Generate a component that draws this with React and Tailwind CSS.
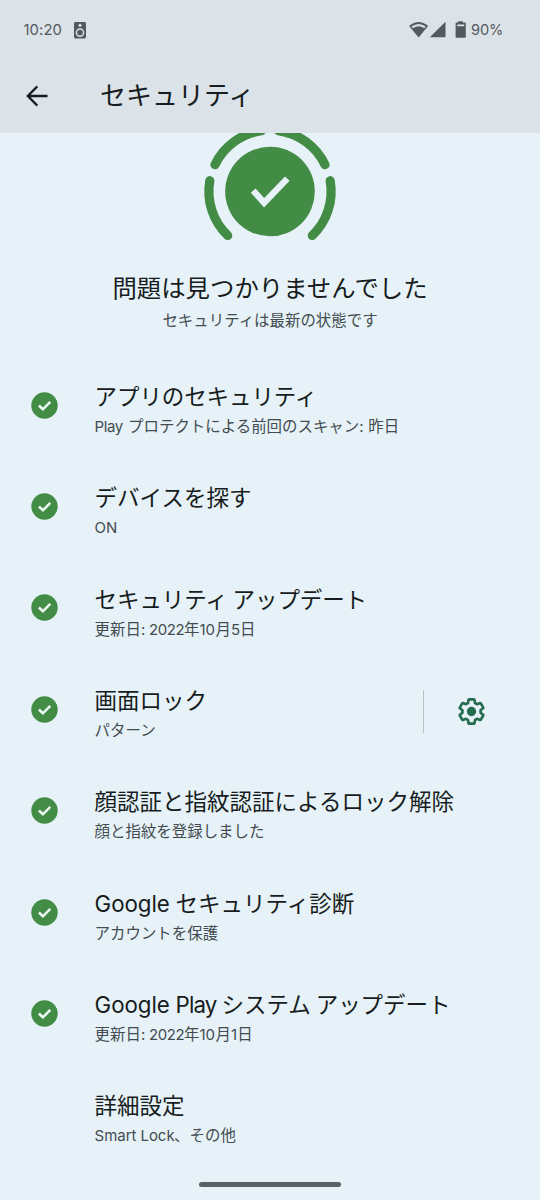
const TITLE_LATIN = "inline-block whitespace-pre font-['Inter'] text-[22.3px] leading-none";
const SUB_LATIN = "inline-block whitespace-pre font-['Inter'] text-[15px] leading-none";

const ROWS = [
  {
    title: [['アプリのセキュリティ', 'tracking-[-0.1px]']],
    sub: [['Play', `${SUB_LATIN} w-[33.5px] tracking-[-0.4px]`], ['プロテクトによる前回のスキャン'], [':', `${SUB_LATIN} w-[9px]`], ['昨日']],
  },
  { title: [['デバイスを探す']], sub: [['ON', `${SUB_LATIN} tracking-[-0.1px]`]] },
  {
    title: [['セキュリティ アップデート', 'tracking-[-0.1px]']],
    sub: [
      ['更新日'], [':', `${SUB_LATIN} w-[8px]`],
      ['2022', `${SUB_LATIN} w-[35px] tracking-[-0.4px]`], ['年'],
      ['10', `${SUB_LATIN} w-[16.2px] tracking-[-0.1px]`], ['月'],
      ['5', `${SUB_LATIN} w-[8.9px]`], ['日'],
    ],
  },
  { title: [['画面ロック']], sub: [['パターン']], settings: true },
  { title: [['顔認証と指紋認証によるロック解除']], sub: [['顔と指紋を登録しました']] },
  {
    title: [['Google', `${TITLE_LATIN} w-[81px] tracking-[-0.05px]`], ['セキュリティ診断']],
    sub: [['アカウントを保護']],
  },
  {
    title: [['Google', `${TITLE_LATIN} w-[81px] tracking-[-0.05px]`], ['Play', `${TITLE_LATIN} w-[46px] tracking-[-0.9px]`], ['システム アップデート', 'tracking-[-0.05px]']],
    sub: [
      ['更新日'], [':', `${SUB_LATIN} w-[8px]`],
      ['2022', `${SUB_LATIN} w-[35px] tracking-[-0.4px]`], ['年'],
      ['10', `${SUB_LATIN} w-[16.2px] tracking-[-0.1px]`], ['月'],
      ['1', `${SUB_LATIN} w-[6.2px]`], ['日'],
    ],
  },
  {
    title: [['詳細設定']],
    sub: [['Smart Lock', `${SUB_LATIN} w-[79.5px] tracking-[-0.05px]`], ['、その他']],
    plain: true,
  },
];

function Parts({ parts }) {
  return parts.map(([text, cls], i) => (
    <span key={i} className={cls}>{text}</span>
  ));
}

function CheckBadge() {
  return (
    <svg className="block h-[27px] w-[27px]" viewBox="0 0 27 27">
      <circle cx="13.5" cy="13.5" r="13.2" fill="#438c45" />
      <path d="M7.9 13.5 L11.9 17.3 L19.3 9.9" fill="none" stroke="#eef8f3" strokeWidth="2.6" />
    </svg>
  );
}

function Gear() {
  return (
    <svg className="block h-[31px] w-[31px] overflow-visible" viewBox="0 0 24 24">
      <path
        fill="none"
        stroke="#246b4f"
        strokeWidth="2.1"
        strokeLinejoin="round"
        d="M19.14,12.94c0.04-0.3,0.06-0.61,0.06-0.94c0-0.32-0.02-0.64-0.07-0.94l2.03-1.58c0.18-0.14,0.23-0.41,0.12-0.61l-1.92-3.32c-0.12-0.22-0.37-0.29-0.59-0.22l-2.39,0.96c-0.5-0.38-1.03-0.7-1.62-0.94L14.4,2.81c-0.04-0.24-0.24-0.41-0.48-0.41h-3.84c-0.24,0-0.43,0.17-0.47,0.41L9.25,5.35C8.66,5.59,8.12,5.92,7.63,6.29L5.24,5.33c-0.22-0.08-0.47,0-0.59,0.22L2.74,8.87C2.62,9.08,2.66,9.34,2.86,9.48l2.03,1.58C4.84,11.36,4.8,11.69,4.8,12s0.02,0.64,0.07,0.94l-2.03,1.58c-0.18,0.14-0.23,0.41-0.12,0.61l1.92,3.32c0.12,0.22,0.37,0.29,0.59,0.22l2.39-0.96c0.5,0.38,1.03,0.7,1.62,0.94l0.36,2.54c0.05,0.24,0.24,0.41,0.48,0.41h3.84c0.24,0,0.44-0.17,0.47-0.41l0.36-2.54c0.59-0.24,1.13-0.56,1.62-0.94l2.39,0.96c0.22,0.08,0.47,0,0.59-0.22l1.92-3.32c0.12-0.22,0.07-0.47-0.12-0.61L19.14,12.94z"
        transform="translate(12 12) scale(0.98) translate(-12 -12)"
      />
      <circle cx="12" cy="12" r="3.6" fill="#246b4f" />
    </svg>
  );
}

function StatusBar() {
  return (
    <div className="flex h-[60px] items-center pl-[23.5px] pr-[37px] text-[#53595e]">
      <span className="w-[50.5px] whitespace-nowrap font-['Inter'] text-[14.8px] leading-5 tracking-[0.1px]">10:20</span>
      <svg className="block h-[17px] w-3" viewBox="0 0 12 17">
        <rect width="12" height="16.4" rx="1.4" fill="#53595e" />
        <circle cx="6" cy="3.3" r="1.5" fill="#dbe2e8" />
        <circle cx="6" cy="10.6" r="3.6" fill="none" stroke="#dbe2e8" strokeWidth="1.5" />
      </svg>
      <div className="ml-auto flex items-center">
        <svg className="block h-[18px] w-[58px]" viewBox="0.7 0 58 18" overflow="visible">
          <path d="M-0.2 4.9 Q9.3 -3 18.8 4.9 L9.3 16.4 Z" fill="#53595e" />
          <path d="M2.2 5.6 Q9.3 0.3 16.4 5.6 L15 7.2 Q9.3 3.2 3.6 7.2 Z" fill="#dbe2e8" />
          <path d="M36.2 0.8 V16.2 H20.5 Z" fill="#53595e" />
          <path d="M48.9 0.2 H53.5 V1.6 H55.8 Q56.5 1.6 56.5 2.3 V15.5 Q56.5 16.8 55.2 16.8 H47.7 Q46.3 16.8 46.3 15.5 V2.3 Q46.3 1.6 47.1 1.6 H48.9 Z" fill="#53595e" />
          <path d="M47.9 3.5 H54.9 V5.2 H47.9 Z" fill="#dbe2e8" />
        </svg>
        <span className="ml-[3.5px] w-8 whitespace-nowrap font-['Inter'] text-[14.6px] leading-5 tracking-[-0.1px]">90%</span>
      </div>
    </div>
  );
}

function Row({ row }) {
  return (
    <div className="flex h-[101.35px] shrink-0 items-start">
      <div className="w-[94.6px] shrink-0 pl-[31px] pt-[12.8px]">{!row.plain && <CheckBadge />}</div>
      <div className="flex-1 whitespace-nowrap">
        <div className="h-[34px] text-[22.5px] leading-[32px] text-[#161c20]"><Parts parts={row.title} /></div>
        <div className="h-6 text-[15.45px] leading-6 text-[#434b50]"><Parts parts={row.sub} /></div>
      </div>
      {row.settings && (
        <div className="flex items-center pr-[53px] pt-[6.7px]">
          <div className="mr-[32px] h-[43px] w-[1.5px] bg-[#b9c2c7]" />
          <Gear />
        </div>
      )}
    </div>
  );
}

export default function App() {
  return (
    <div className="flex h-[1200px] w-[540px] flex-col overflow-hidden bg-[#e6f2f7] font-['Noto_Sans_CJK_JP',sans-serif]">
      <header className="h-[132.5px] shrink-0 bg-[#dbe2e8]">
        <StatusBar />
        <div className="flex h-[72px] items-center pl-[26px]">
          <svg className="block h-[22px] w-[22px]" viewBox="0 0 22 22" fill="none" stroke="#161c20" strokeWidth="2.3">
            <path d="M21.5 11 H2 M11.3 1.4 L1.8 11 L11.3 20.6" />
          </svg>
          <h1 className="ml-[52px] pb-1 text-[26px] leading-9 text-[#161c20]">セキュリティ</h1>
        </div>
      </header>
      <section className="flex h-[246.5px] shrink-0 flex-col items-center">
        <svg className="block h-[110px] w-[140px] shrink-0" viewBox="200 132.5 140 110">
          <circle cx="270" cy="191" r="44.8" fill="#438c45" />
          <path d="M253.2 190.1 L264.1 202.2 L287.3 178.1" fill="none" stroke="#e6f2f7" strokeWidth="6.4" />
          <g fill="none" stroke="#438c45" strokeWidth="9.2" strokeLinecap="round">
            <path d="M209.8 180.2 A61.2 61.2 0 0 0 227.7 235" />
            <path d="M330.2 180.2 A61.2 61.2 0 0 1 312.3 235" />
            <path d="M215 164.2 A61.2 61.2 0 0 1 261.7 130.1" />
            <path d="M325 164.2 A61.2 61.2 0 0 0 278.3 130.1" />
          </g>
        </svg>
        <h2 className="mt-[26.5px] text-[24.4px] leading-9 text-[#161c20]">問題は見つかりませんでした</h2>
        <p className="mt-[1.5px] text-[15.45px] leading-6 text-[#434b50]">セキュリティは最新の状態です</p>
      </section>
      <main className="flex h-[799px] shrink-0 flex-col">
        {ROWS.map((row, i) => <Row key={i} row={row} />)}
      </main>
      <div className="mt-[3.5px] h-[5px] w-[142px] shrink-0 self-center rounded-full bg-[#5b6266]" />
    </div>
  );
}
